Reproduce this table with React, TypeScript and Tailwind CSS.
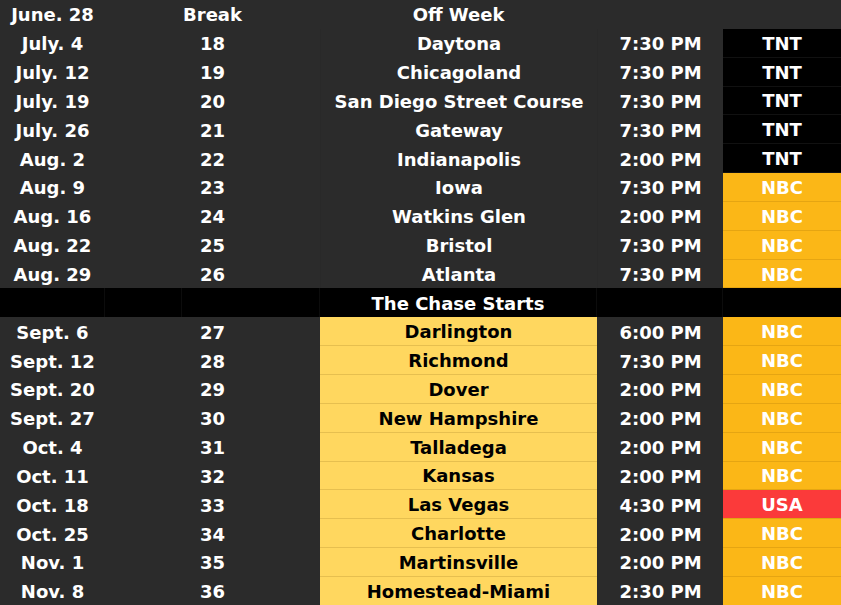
type Row = {
    date: string;
    num: string;
    track: string;
    time: string;
    net: string;
};

const rows: Row[] = [
    { date: "July. 4", num: "18", track: "Daytona", time: "7:30 PM", net: "TNT" },
    { date: "July. 12", num: "19", track: "Chicagoland", time: "7:30 PM", net: "TNT" },
    { date: "July. 19", num: "20", track: "San Diego Street Course", time: "7:30 PM", net: "TNT" },
    { date: "July. 26", num: "21", track: "Gateway", time: "7:30 PM", net: "TNT" },
    { date: "Aug. 2", num: "22", track: "Indianapolis", time: "2:00 PM", net: "TNT" },
    { date: "Aug. 9", num: "23", track: "Iowa", time: "7:30 PM", net: "NBC" },
    { date: "Aug. 16", num: "24", track: "Watkins Glen", time: "2:00 PM", net: "NBC" },
    { date: "Aug. 22", num: "25", track: "Bristol", time: "7:30 PM", net: "NBC" },
    { date: "Aug. 29", num: "26", track: "Atlanta", time: "7:30 PM", net: "NBC" },
];

const chase: Row[] = [
    { date: "Sept. 6", num: "27", track: "Darlington", time: "6:00 PM", net: "NBC" },
    { date: "Sept. 12", num: "28", track: "Richmond", time: "7:30 PM", net: "NBC" },
    { date: "Sept. 20", num: "29", track: "Dover", time: "2:00 PM", net: "NBC" },
    { date: "Sept. 27", num: "30", track: "New Hampshire", time: "2:00 PM", net: "NBC" },
    { date: "Oct. 4", num: "31", track: "Talladega", time: "2:00 PM", net: "NBC" },
    { date: "Oct. 11", num: "32", track: "Kansas", time: "2:00 PM", net: "NBC" },
    { date: "Oct. 18", num: "33", track: "Las Vegas", time: "4:30 PM", net: "USA" },
    { date: "Oct. 25", num: "34", track: "Charlotte", time: "2:00 PM", net: "NBC" },
    { date: "Nov. 1", num: "35", track: "Martinsville", time: "2:00 PM", net: "NBC" },
    { date: "Nov. 8", num: "36", track: "Homestead-Miami", time: "2:30 PM", net: "NBC" },
];

const netClass = (net: string) => {
    if (net === "TNT") return "bg-black border-[#111]";
    if (net === "USA") return "bg-[#fb3a3a] border-[#e0a514]";
    return "bg-[#fbb717] border-[#e5a512]";
};

// text sits a touch low in its row
const cell = "flex items-center justify-center whitespace-nowrap pt-[2px]";

const ScheduleRow = ({ r, chase }: { r: Row; chase?: boolean }) => (
    <div className="flex h-[28.85px]">
        <div className={`${cell} w-[105px]`}>{r.date}</div>
        <div className={`${cell} w-[215px]`}>{r.num}</div>
        <div
            className={`${cell} w-[277px] ${
                chase ? "bg-[#ffd75f] text-black border-b border-[#e6bf4f]" : "border-l border-[#292929]"
            }`}
        >
            {r.track}
        </div>
        <div className={`${cell} w-[126px] border-l border-[#292929]`}>{r.time}</div>
        <div className={`${cell} flex-1 border-b ${netClass(r.net)}`}>{r.net}</div>
    </div>
);

export default function App() {
    return (
        <div
            className="w-[841px] h-[605px] overflow-hidden bg-[#2b2b2b] text-white font-bold text-[18px] leading-none"
            style={{ fontFamily: '"DejaVu Sans", "Open Sans", sans-serif' }}
        >
            <div className="flex h-[28.85px]">
                <div className={`${cell} w-[105px]`}>June. 28</div>
                <div className={`${cell} w-[215px]`}>Break</div>
                <div className={`${cell} w-[277px]`}>Off Week</div>
                <div className="w-[126px]" />
                <div className="flex-1" />
            </div>
            {rows.map((r) => (
                <ScheduleRow key={r.date} r={r} />
            ))}
            <div className="flex h-[28.85px] bg-black">
                <div className="w-[105px] border-r border-[#0c0c0c]" />
                <div className="w-[77px] border-r border-[#0c0c0c]" />
                <div className="w-[138px] border-r border-[#0c0c0c]" />
                <div className={`${cell} w-[277px] border-r border-[#0c0c0c]`}>The Chase Starts</div>
                <div className="w-[126px] border-r border-[#0c0c0c]" />
                <div className="flex-1" />
            </div>
            {chase.map((r) => (
                <ScheduleRow key={r.date} r={r} chase />
            ))}
        </div>
    );
}
